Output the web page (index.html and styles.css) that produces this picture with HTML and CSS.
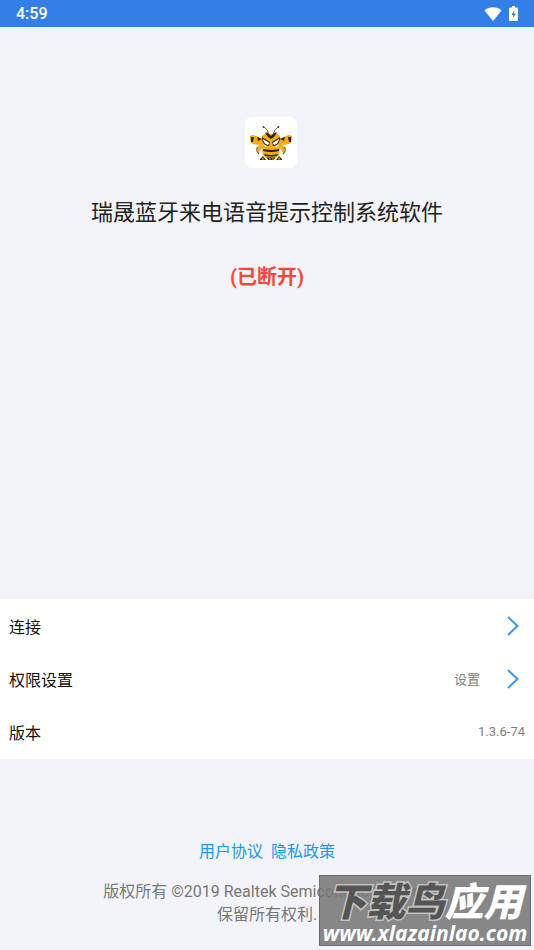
FILE: index.html
```html
<!DOCTYPE html>
<html lang="zh-CN">
<head>
    <meta charset="UTF-8">
    <meta name="viewport" content="width=device-width, initial-scale=1.0">
    <title>瑞晟蓝牙来电语音提示控制系统软件</title>
    <link rel="stylesheet" href="styles.css">
</head>
<body>
    <!-- Status Bar -->
    <header class="status-bar">
        <span class="status-time">4:59</span>
        <div class="status-icons">
            <svg class="icon-wifi" viewBox="0 0 18 14" aria-hidden="true">
                <path d="M0.5 3.5C5-.8 13-.8 17.500 3.500L9 14z" fill="#fff"/>
            </svg>
            <svg class="icon-battery" viewBox="0 0 9 15" aria-hidden="true">
                <path d="M3 0h3v1.500h2q1 0 1 1V14q0 1-1 1H1q-1 0-1-1V2.500q0-1 1-1h2z" fill="#fff"/>
                <path d="M5.500 4L2.500 9H4.200L3.700 12.500L6.800 7.500H5z" fill="#347fe5"/>
            </svg>
        </div>
    </header>

    <!-- App Info -->
    <main class="hero">
        <div class="app-logo">
            <svg viewBox="0 0 52 51" role="img" aria-label="应用图标">
                <g fill="none" stroke="#4a3d28" stroke-width=".8">
                    <path d="M24 18Q23 12 19 10M28 18Q29 12 33 10"/>
                    <path d="M15 29L12 31L12 34L14 37M37 29L40 31L40 34L38 37" stroke-width="1.200"/>
                </g>
                <circle cx="18.500" cy="10" r=".9" fill="#4a3d28"/>
                <circle cx="33.500" cy="10" r=".9" fill="#4a3d28"/>
                <g fill="#f7ad12">
                    <path d="M19 22L8 18Q4 18 5 22L6 26Q9 28 18 28z"/>
                    <path d="M33 22L44 18Q48 18 47 22L46 26Q43 28 34 28z"/>
                    <path d="M18 27L13 29L12 34L14 36L16 32L20 30zM34 27L39 29L40 34L38 36L36 32L32 30z"/>
                    <path d="M17 31Q26 27 35 31L34 38L30 42H22L18 38z"/>
                </g>
                <g fill="#2b2419">
                    <path d="M6 20L9 20L8 25L6 25zM46 20L43 20L44 25L46 25zM12 20L17 22L13 24zM40 20L35 22L39 24z"/>
                    <path d="M18 32Q26 34 34 32V34Q26 36 18 34zM19 37Q26 39 33 37L32 39Q26 40 20 39z"/>
                    <path d="M15 42L18 39L21 43H15zM37 42L34 39L31 43H37zM22 40.500H30L29 43H23z"/>
                </g>
                <path d="M17 19Q21 15 26 17Q31 15 35 19Q37 27 26 31Q15 27 17 19z" fill="#f7ad12"/>
                <path d="M20 15.500Q23 15 24 17L26 19L28 17Q29 15 32 15.500L29 20L26 22L23 20z" fill="#2b2419"/>
                <path d="M17 20L25 25L24 29Q17 29 17 20zM35 20L27 25L28 29Q35 29 35 20z" fill="#2b2419"/>
                <path d="M18 22L24.500 26L23 28Q18.500 27 18 22zM34 22L27.500 26L29 28Q33.500 27 34 22z" fill="#fff"/>
                <path d="M16.500 42.500L18 40L19 42.500zM35.500 42.500L34 40L33 42.500zM24 42.500L25 40.500L26 42.500zM27 42.500L28 40.500L29 42.500z" fill="#f7ad12"/>
            </svg>
        </div>
        <h1 class="app-title">瑞晟蓝牙来电语音提示控制系统软件</h1>
        <p class="connection-state">(已断开)</p>
    </main>

    <!-- Settings -->
    <section class="settings">
        <button class="settings-row" type="button">
            <span>连接</span>
            <svg class="chevron" viewBox="0 0 12 20" aria-hidden="true"><path d="M1 1L10.500 10L1 19"/></svg>
        </button>
        <button class="settings-row" type="button">
            <span>权限设置</span>
            <span class="row-value">设置</span>
            <svg class="chevron" viewBox="0 0 12 20" aria-hidden="true"><path d="M1 1L10.500 10L1 19"/></svg>
        </button>
        <div class="settings-row">
            <span>版本</span>
            <span class="row-value">1.3.6-74</span>
        </div>
    </section>

    <!-- Footer -->
    <footer class="footer">
        <nav class="footer-links">
            <a href="#agreement">用户协议</a>
            <a href="#privacy">隐私政策</a>
        </nav>
        <p class="copyright">版权所有 ©2019 Realtek Semiconductor Corp.<br>保留所有权利.</p>
    </footer>

    <div class="watermark">
        <div class="watermark-name"><span class="name-dark">下载鸟</span><span>应用</span></div>
        <div class="watermark-url">www.xlazainlao.com</div>
    </div>
</body>
</html>
```

FILE: styles.css
```css
* {
    box-sizing: border-box;
}

body {
    margin: 0;
    min-height: 100vh;
    display: flex;
    flex-direction: column;
    position: relative;
    font-family: Roboto, "Noto Sans CJK SC", sans-serif;
    font-size: 16px;
    color: #111;
    background: #f3f4f9;
}

.status-bar {
    display: flex;
    justify-content: space-between;
    align-items: center;
    height: 27px;
    padding: 0 16px;
    color: #fff;
    background: #347fe5;
}

.status-time {
    font-weight: 500;
}

.status-icons {
    display: flex;
    align-items: center;
    gap: 7px;
}

.icon-wifi {
    width: 18px;
    height: 14px;
}

.icon-battery {
    width: 9px;
    height: 15px;
}

.hero {
    flex: 1;
    display: flex;
    flex-direction: column;
    align-items: center;
    padding: 90px 16px 32px;
}

.app-logo {
    width: 52px;
    height: 51px;
    margin-left: 8px;
    border-radius: 7px;
    background: #fff;
}

.app-logo svg {
    display: block;
}

.app-title {
    margin: 29px 0 0;
    font-size: 22px;
    font-weight: 400;
    line-height: 32px;
    color: #222;
}

.connection-state {
    margin: 34px 0 0;
    font-size: 20px;
    font-weight: 700;
    line-height: 28px;
    color: #f8463b;
}

.settings {
    padding-bottom: 1px;
    background: #fff;
}

.settings-row {
    display: flex;
    align-items: center;
    justify-content: space-between;
    width: 100%;
    min-height: 53px;
    padding: 0 9px;
    border: none;
    background: none;
    font: inherit;
    color: inherit;
    text-align: left;
}

.row-value {
    margin-left: auto;
    font-size: 13px;
    color: #808080;
}

.chevron {
    width: 12px;
    height: 20px;
    margin: 0 6px 0 27px;
    fill: none;
    stroke: #4296ea;
    stroke-width: 2;
}

.footer {
    padding: 81px 16px 24px;
    text-align: center;
}

.footer-links {
    display: flex;
    justify-content: center;
    gap: 8px;
    line-height: 24px;
}

.footer-links a {
    color: #2196f3;
    text-decoration: none;
}

.copyright {
    margin: 16px 0 0;
    line-height: 23px;
    color: #777;
}

.watermark {
    position: absolute;
    right: 3px;
    bottom: 4px;
    width: 212px;
    height: 71px;
    border: 1px solid #6c6c6c;
    background: rgba(120, 120, 120, 0.88);
    color: #fff;
    text-align: center;
    white-space: nowrap;
}

.watermark-name {
    font-size: 39px;
    font-style: italic;
    font-weight: 900;
    line-height: 40px;
    padding-top: 7px;
}

.name-dark {
    color: #555;
    -webkit-text-stroke: 3px #c4c4c4;
    paint-order: stroke fill;
}

.watermark-url {
    font-family: "Noto Sans", sans-serif;
    font-size: 21px;
    font-style: italic;
    font-weight: 700;
    line-height: 20px;
}
```
